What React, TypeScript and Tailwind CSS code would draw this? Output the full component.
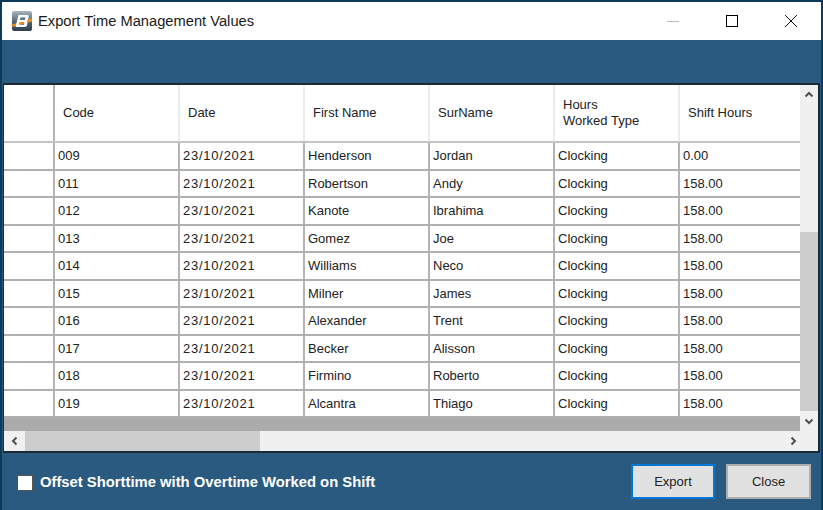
const rows = [
  ['009', 'Henderson', 'Jordan', '0.00'],
  ['011', 'Robertson', 'Andy', '158.00'],
  ['012', 'Kanote', 'Ibrahima', '158.00'],
  ['013', 'Gomez', 'Joe', '158.00'],
  ['014', 'Williams', 'Neco', '158.00'],
  ['015', 'Milner', 'James', '158.00'],
  ['016', 'Alexander', 'Trent', '158.00'],
  ['017', 'Becker', 'Alisson', '158.00'],
  ['018', 'Firmino', 'Roberto', '158.00'],
  ['019', 'Alcantra', 'Thiago', '158.00'],
];

function Chevron({ dir }: { dir: 'up' | 'down' | 'left' | 'right' }) {
  const d = {
    up: 'M1.5 6.5 L5 3 L8.5 6.5',
    down: 'M1.5 3.5 L5 7 L8.5 3.5',
    left: 'M6.5 1.5 L3 5 L6.5 8.5',
    right: 'M3.5 1.5 L7 5 L3.5 8.5',
  }[dir];
  return (
    <svg width="10" height="10" viewBox="0 0 10 10" fill="none" stroke="#505050" strokeWidth="2">
      <path d={d} />
    </svg>
  );
}

function Logo() {
  return (
    <svg width="20" height="20" viewBox="0 0 20 20">
      <defs>
        <linearGradient id="logoBg" x1="0" y1="0" x2="0" y2="1">
          <stop offset="0" stopColor="#a9b6c0" />
          <stop offset="0.55" stopColor="#4f6475" />
          <stop offset="1" stopColor="#2f3f4c" />
        </linearGradient>
      </defs>
      <rect width="20" height="20" rx="2" fill="url(#logoBg)" />
      <path d="M0 13.5 L20 7 V10.5 L0 16 Z" fill="#e58a1f" />
      <path
        fillRule="evenodd"
        d="M6.5 4 H15.5 Q17 4 16.6 6 L16.2 8 Q15.9 9.4 14.6 9.9 Q15.7 10.4 15.4 12 L15.1 14 Q14.8 16 12.8 16 H3.5 Z M8.4 6.2 L7.9 8.9 H13 L13.5 6.2 Z M7.5 11 L7 13.8 H12 L12.5 11 Z"
        fill="#fff"
      />
    </svg>
  );
}

export default function App() {
  const cols = 'grid grid-cols-[51px_125px_125px_125px_125px_125px_120px]';
  return (
    <div className="w-[823px] h-[510px] bg-[#2a5a80] border-t-2 border-l-2 border-r-[2px] border-[#0e3a58] flex flex-col font-['Liberation_Sans',sans-serif] overflow-hidden">
      <div className="h-[38px] bg-white flex items-center shrink-0">
        <div className="ml-[10px] mr-[6px]">
          <Logo />
        </div>
        <span className="text-[14.7px] text-[#1a1a1a]">Export Time Management Values</span>
        <div className="ml-auto mr-px flex items-center">
          <div className="w-[59px] flex justify-center">
            <div className="w-3 h-px bg-[#b8b8b8]" />
          </div>
          <div className="w-[59px] flex justify-center">
            <div className="w-3 h-3 border border-black" />
          </div>
          <div className="w-[59px] flex justify-center">
            <svg width="14" height="14" viewBox="0 0 14 14" stroke="#111" strokeWidth="1">
              <path d="M1 1 L13 13 M13 1 L1 13" />
            </svg>
          </div>
        </div>
      </div>

      <div className="h-[43px] shrink-0" />

      <div className="mx-px w-[817px] h-[370px] shrink-0 bg-[#f0f0f0] border-2 border-l border-[#1c2a33] flex flex-col">
        <div className="flex h-[346px]">
          <div className="w-[796px] bg-[#ababab] text-[13px] text-[#222]">
            <div className={`${cols} h-[58px] bg-white border-b-2 border-[#c4c4c4]`}>
              <div className="border-r-2 border-[#b4b4b4]" />
              {['Code', 'Date', 'First Name', 'SurName', 'Hours\nWorked Type', 'Shift Hours'].map((h, i) => (
                <div key={h} className={`flex items-center pl-2 whitespace-pre-line leading-[16px] ${i < 5 ? 'border-r-2 border-[#ececec]' : ''}`}>
                  {h}
                </div>
              ))}
            </div>
            {rows.map((r) => (
              <div key={r[0]} className={`${cols} h-[27.5px] bg-white border-b-2 border-[#b0b0b0] items-stretch`}>
                <div className="border-r-2 border-[#b4b4b4]" />
                {[r[0], '23/10/2021', r[1], r[2], 'Clocking', r[3]].map((c, i) => (
                  <div key={i} className={`flex items-center pl-[3px] ${i === 1 ? 'tracking-[0.75px]' : ''} ${i < 5 ? 'border-r-2 border-[#b4b4b4]' : ''}`}>
                    {c}
                  </div>
                ))}
              </div>
            ))}
          </div>
          <div className="flex-1 flex flex-col items-center bg-[#f0f0f0]">
            <div className="h-[20px] flex items-center"><Chevron dir="up" /></div>
            <div className="w-full flex-1 flex flex-col">
              <div className="h-[127px]" />
              <div className="flex-1 bg-[#cdcdcd]" />
            </div>
            <div className="h-[20px] flex items-center"><Chevron dir="down" /></div>
          </div>
        </div>
        <div className="flex items-center flex-1 bg-[#f0f0f0]">
          <div className="w-[21px] flex justify-center"><Chevron dir="left" /></div>
          <div className="w-[235px] h-full bg-[#cdcdcd]" />
          <div className="ml-auto w-[51px] flex justify-center"><Chevron dir="right" /></div>
        </div>
      </div>

      <div className="flex items-center flex-1 pl-[15px] pr-[10px]">
        <label className="flex items-center gap-[7px] pt-[2px] text-white text-[14.8px] font-bold">
          <span className="w-[16px] h-[16px] bg-white border border-[#555]" />
          Offset Shorttime with Overtime Worked on Shift
        </label>
        <div className="ml-auto flex gap-[11px]">
          <button className="w-[84px] h-[35px] bg-[#e1e1e1] border-2 border-[#0078d7] text-[13px] text-[#222]">Export</button>
          <button className="w-[85px] h-[35px] bg-[#e1e1e1] border-2 border-[#adadad] text-[13px] text-[#222]">Close</button>
        </div>
      </div>
    </div>
  );
}
